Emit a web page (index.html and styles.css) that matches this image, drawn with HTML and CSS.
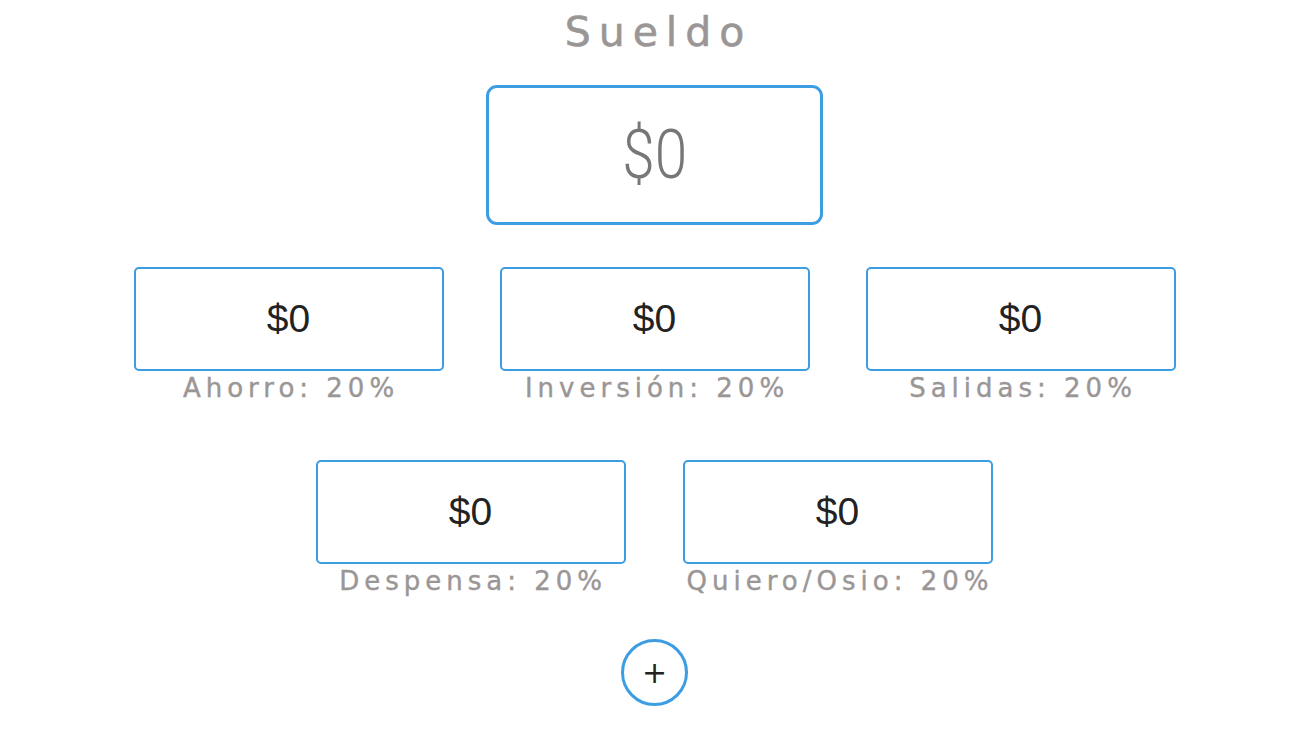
FILE: index.html
```html
<!DOCTYPE html>
<html lang="es">
<head>
<meta charset="utf-8">
<title>Sueldo</title>
<link rel="stylesheet" href="styles.css">
</head>
<body>
<main class="app">
  <h1 class="title">Sueldo</h1>
  <div class="salary-box"><span class="salary-value">$0</span></div>
  <section class="buckets">
    <div class="row">
      <div class="item"><div class="box">$0</div><div class="label">Ahorro: 20%</div></div>
      <div class="item"><div class="box">$0</div><div class="label">Inversión: 20%</div></div>
      <div class="item"><div class="box">$0</div><div class="label">Salidas: 20%</div></div>
    </div>
    <div class="row">
      <div class="item"><div class="box">$0</div><div class="label">Despensa: 20%</div></div>
      <div class="item"><div class="box">$0</div><div class="label">Quiero/Osio: 20%</div></div>
    </div>
  </section>
  <button class="add-btn" type="button">+</button>
</main>
</body>
</html>
```

FILE: styles.css
```css
* { box-sizing: border-box; }
html, body { margin: 0; padding: 0; background: #ffffff; }
body { font-family: "DejaVu Sans", sans-serif; }

.app {
  display: flex;
  flex-direction: column;
  align-items: center;
}

.title {
  margin: 7px 0 0;
  font-size: 41px;
  line-height: 50px;
  font-weight: normal;
  letter-spacing: 8px;
  padding-left: 8px;
  color: #9b9696;
  -webkit-text-stroke: 0.6px #9b9696;
}

.salary-box {
  margin-top: 28px;
  width: 337px;
  height: 140px;
  border: 3px solid #3c9de3;
  border-radius: 11px;
  display: flex;
  align-items: center;
  justify-content: center;
}

.salary-value {
  font-family: "Roboto", sans-serif;
  font-weight: 300;
  font-size: 68px;
  color: #777777;
  display: inline-block;
  transform: scaleX(0.86);
}

.buckets {
  margin-top: 42px;
  display: flex;
  flex-direction: column;
  gap: 55px;
}

.row {
  display: flex;
  justify-content: center;
  gap: 56px;
}

.item {
  display: flex;
  flex-direction: column;
  align-items: center;
}

.box {
  width: 310px;
  height: 104px;
  border: 2px solid #3c9de3;
  border-radius: 5px;
  display: flex;
  align-items: center;
  justify-content: center;
  font-family: "Liberation Sans", "Roboto", sans-serif;
  font-size: 39px;
  color: #222222;
}

.label {
  height: 34px;
  line-height: 34px;
  font-size: 26px;
  letter-spacing: 5px;
  padding-left: 5px;
  color: #9b9696;
  -webkit-text-stroke: 0.4px #9b9696;
  white-space: nowrap;
}

.add-btn {
  margin-top: 41px;
  width: 67px;
  height: 67px;
  border-radius: 50%;
  border: 3px solid #3c9de3;
  background: #ffffff;
  color: #222222;
  font-family: "DejaVu Sans", sans-serif;
  font-size: 30px;
  line-height: 1;
  padding: 0;
  display: flex;
  align-items: center;
  justify-content: center;
}
```
